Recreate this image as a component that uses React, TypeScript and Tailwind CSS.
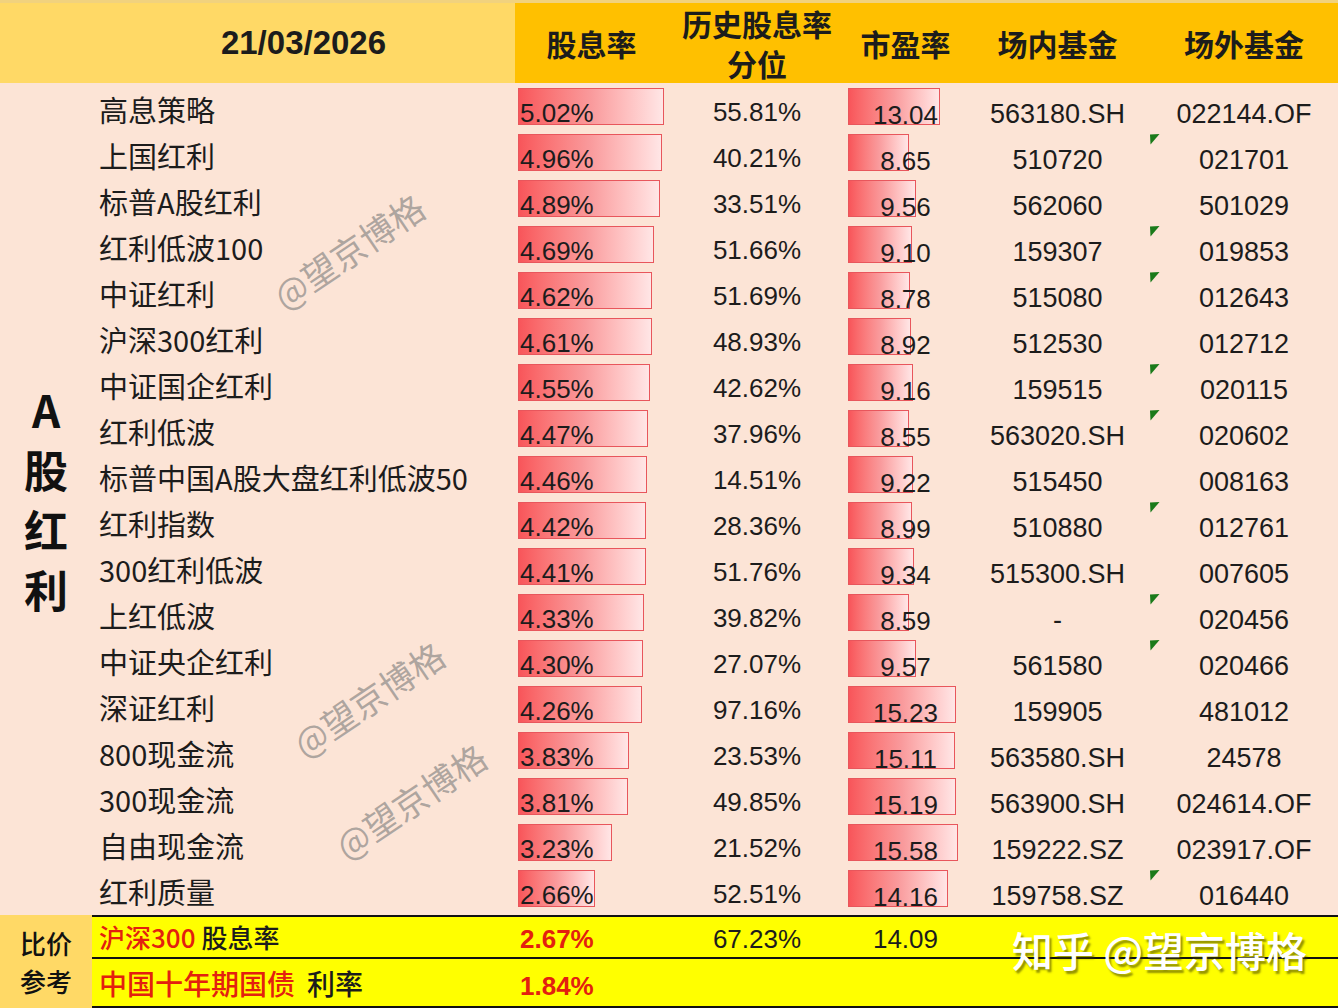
import React from "react";

type Row = {
  name: string;
  dy: number;
  hist: string;
  pe: number;
  inFund: string;
  outFund: string;
  mark?: boolean;
};

const rows: Row[] = [
  { name: "高息策略", dy: 5.02, hist: "55.81%", pe: 13.04, inFund: "563180.SH", outFund: "022144.OF" },
  { name: "上国红利", dy: 4.96, hist: "40.21%", pe: 8.65, inFund: "510720", outFund: "021701", mark: true },
  { name: "标普A股红利", dy: 4.89, hist: "33.51%", pe: 9.56, inFund: "562060", outFund: "501029" },
  { name: "红利低波100", dy: 4.69, hist: "51.66%", pe: 9.1, inFund: "159307", outFund: "019853", mark: true },
  { name: "中证红利", dy: 4.62, hist: "51.69%", pe: 8.78, inFund: "515080", outFund: "012643", mark: true },
  { name: "沪深300红利", dy: 4.61, hist: "48.93%", pe: 8.92, inFund: "512530", outFund: "012712" },
  { name: "中证国企红利", dy: 4.55, hist: "42.62%", pe: 9.16, inFund: "159515", outFund: "020115", mark: true },
  { name: "红利低波", dy: 4.47, hist: "37.96%", pe: 8.55, inFund: "563020.SH", outFund: "020602", mark: true },
  { name: "标普中国A股大盘红利低波50", dy: 4.46, hist: "14.51%", pe: 9.22, inFund: "515450", outFund: "008163" },
  { name: "红利指数", dy: 4.42, hist: "28.36%", pe: 8.99, inFund: "510880", outFund: "012761", mark: true },
  { name: "300红利低波", dy: 4.41, hist: "51.76%", pe: 9.34, inFund: "515300.SH", outFund: "007605" },
  { name: "上红低波", dy: 4.33, hist: "39.82%", pe: 8.59, inFund: "-", outFund: "020456", mark: true },
  { name: "中证央企红利", dy: 4.3, hist: "27.07%", pe: 9.57, inFund: "561580", outFund: "020466", mark: true },
  { name: "深证红利", dy: 4.26, hist: "97.16%", pe: 15.23, inFund: "159905", outFund: "481012" },
  { name: "800现金流", dy: 3.83, hist: "23.53%", pe: 15.11, inFund: "563580.SH", outFund: "24578" },
  { name: "300现金流", dy: 3.81, hist: "49.85%", pe: 15.19, inFund: "563900.SH", outFund: "024614.OF" },
  { name: "自由现金流", dy: 3.23, hist: "21.52%", pe: 15.58, inFund: "159222.SZ", outFund: "023917.OF" },
  { name: "红利质量", dy: 2.66, hist: "52.51%", pe: 14.16, inFund: "159758.SZ", outFund: "016440", mark: true },
];

const cjk = "font-['Noto_Sans_CJK_SC',sans-serif]";
const num = "font-['Liberation_Sans','Noto_Sans_CJK_SC',sans-serif]";
const cols = "grid grid-cols-[423px_165px_166px_119px_185px_188px]";

function Bar({ width, left }: { width: number; left: number }) {
  return (
    <div
      className="absolute top-[1px] h-[37px] border-[1.5px] border-[#E8565C] bg-linear-to-r from-[#F8555A] via-[#F99A9C] to-[#FFE6E6]"
      style={{ width, left }}
    />
  );
}

function Watermark({ className }: { className: string }) {
  return (
    <div
      className={`pointer-events-none absolute -translate-x-1/2 -translate-y-1/2 -rotate-[34deg] whitespace-nowrap text-[35px] leading-none text-[#7a7a7a]/60 ${cjk} ${className}`}
    >
      @望京博格
    </div>
  );
}

export default function App() {
  return (
    <div className="relative h-[1008px] w-[1338px] overflow-hidden bg-[#FCE4D6] text-[#1c1c1c]">
      {/* Header */}
      <div className="flex h-[83px]">
        <div className="w-[92px] border-t-[3px] border-[#F1D27E] bg-[#FFD966]" />
        <div className={`${cols} h-full border-t-[3px] border-[#F1D27E]`}>
          <div className={`flex items-center justify-center bg-[#FFD966] text-[33px] font-bold ${num}`}>
            21/03/2026
          </div>
          <div className={`flex items-center justify-center bg-[#FFC000] pr-[12px] text-[30px] font-bold ${cjk}`}>
            股息率
          </div>
          <div className={`flex flex-col items-center justify-center bg-[#FFC000] pr-[12px] text-[30px] font-bold leading-[40px] ${cjk}`}>
            <span>历史股息率</span>
            <span>分位</span>
          </div>
          <div className={`flex items-center justify-center bg-[#FFC000] text-[30px] font-bold ${cjk}`}>
            市盈率
          </div>
          <div className={`flex items-center justify-center bg-[#FFC000] text-[30px] font-bold ${cjk}`}>
            场内基金
          </div>
          <div className={`flex items-center justify-center bg-[#FFC000] text-[30px] font-bold ${cjk}`}>
            场外基金
          </div>
        </div>
      </div>

      {/* Body */}
      <div className="flex h-[832px]">
        <div className={`flex w-[92px] flex-col items-center justify-center text-[44px] font-bold leading-[60px] text-[#111] ${cjk}`}>
          <span>A</span>
          <span>股</span>
          <span>红</span>
          <span>利</span>
        </div>
        <div className="flex flex-col pt-[4px]">
          {rows.map((r) => (
            <div key={r.name} className={`${cols} h-[46px]`}>
              <div className={`flex items-center pb-[2px] pl-[7px] text-[29px] leading-none ${cjk}`}>{r.name}</div>
              <div className={`relative flex items-center pl-[5px] text-[26px] leading-none ${num}`}>
                <Bar width={Math.round(r.dy * 29)} left={3} />
                <span className="relative pt-[6px]">{r.dy.toFixed(2)}%</span>
              </div>
              <div className={`flex items-center justify-center pr-[12px] text-[26px] leading-none ${num}`}>
                <span className="pt-[4px]">{r.hist}</span>
              </div>
              <div className={`relative flex items-center justify-center text-[26px] leading-none ${num}`}>
                <Bar width={Math.round(r.pe * 7.08)} left={2} />
                <span className="relative pt-[10px]">{r.pe.toFixed(2)}</span>
              </div>
              <div className={`flex items-center justify-center text-[27px] leading-none ${num}`}>
                <span className="pt-[8px]">{r.inFund}</span>
              </div>
              <div className={`relative flex items-center justify-center text-[27px] leading-none ${num}`}>
                {r.mark && (
                  <svg className="absolute left-0 top-[1px]" width="10" height="11" viewBox="0 0 10 11">
                    <polygon points="0,0.5 9.5,0 0.5,10.5" fill="#1A7A1A" />
                  </svg>
                )}
                <span className="pt-[8px]">{r.outFund}</span>
              </div>
            </div>
          ))}
        </div>
      </div>

      {/* Comparison rows */}
      <div className="flex h-[93px]">
        <div className={`flex w-[92px] flex-col items-center justify-center bg-[#FFD966] text-[26px] font-medium leading-[38px] text-[#111] ${cjk}`}>
          <span>比价</span>
          <span>参考</span>
        </div>
        <div className="flex flex-1 flex-col bg-[#FFFF00]">
          <div className={`${cols} h-[44px] border-y-2 border-[#111]`}>
            <div className={`flex items-center pl-[7px] text-[26px] font-medium leading-none ${cjk}`}>
              <span className="text-[#E3200F]">沪深300</span>
              <span className="ml-[6px]">股息率</span>
            </div>
            <div className={`flex items-center pl-[5px] text-[26px] font-bold leading-none text-[#E3200F] ${num}`}>
              <span className="pt-[4px]">2.67%</span>
            </div>
            <div className={`flex items-center justify-center pr-[12px] text-[26px] leading-none ${num}`}>
              <span className="pt-[4px]">67.23%</span>
            </div>
            <div className={`flex items-center justify-center text-[26px] leading-none ${num}`}>
              <span className="pt-[4px]">14.09</span>
            </div>
            <div />
            <div />
          </div>
          <div className={`${cols} h-[49px] border-b-2 border-[#111]`}>
            <div className={`flex items-center pl-[7px] text-[28px] font-medium leading-none ${cjk}`}>
              <span className="text-[#E3200F]">中国十年期国债</span>
              <span className="ml-[12px]">利率</span>
            </div>
            <div className={`flex items-center pl-[5px] text-[26px] font-bold leading-none text-[#E3200F] ${num}`}>
              <span className="pt-[6px]">1.84%</span>
            </div>
            <div />
            <div />
            <div />
            <div />
          </div>
        </div>
      </div>

      {/* Watermarks */}
      <Watermark className="left-[348px] top-[250px]" />
      <Watermark className="left-[368px] top-[698px]" />
      <Watermark className="left-[410px] top-[800px]" />
      <div
        className={`pointer-events-none absolute left-[1012px] top-[929px] whitespace-nowrap text-[41px] font-medium leading-none text-white [text-shadow:2px_3px_2px_rgba(60,60,0,0.55)] ${cjk}`}
      >
        知乎 @望京博格
      </div>
    </div>
  );
}
